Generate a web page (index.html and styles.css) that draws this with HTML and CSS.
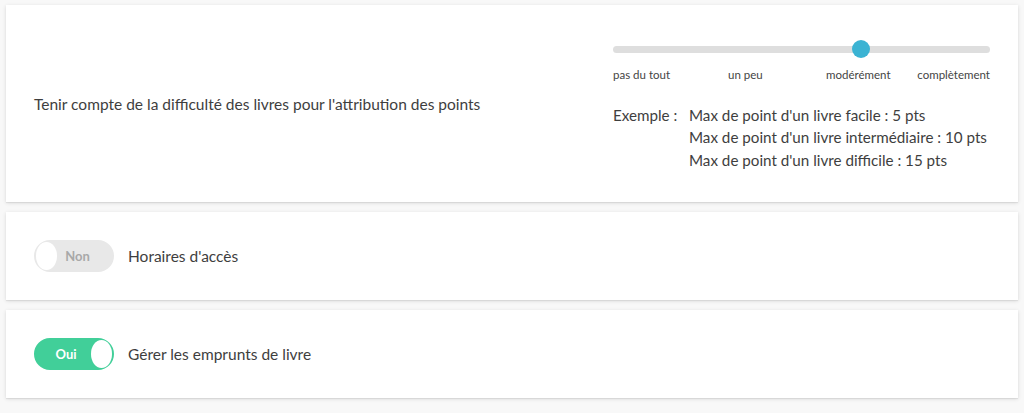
FILE: index.html
```html
<!DOCTYPE html>
<html lang="fr">
<head>
    <meta charset="UTF-8">
    <meta name="viewport" content="width=device-width, initial-scale=1.0">
    <title>Paramètres</title>
    <link rel="stylesheet" href="styles.css">
</head>
<body>
    <div class="card card-difficulty">
        <div class="setting-label">Tenir compte de la difficulté des livres pour l'attribution des points</div>
        <div class="difficulty">
            <div class="slider">
                <div class="slider-track"></div>
                <div class="slider-thumb" style="left: calc(9px + (100% - 18px) * 2 / 3);"></div>
            </div>
            <div class="slider-labels">
                <span>pas du tout</span>
                <span>un peu</span>
                <span>modérément</span>
                <span>complètement</span>
            </div>
            <div class="example">
                <span class="example-title">Exemple :</span>
                <div class="example-lines">
                    <div>Max de point d'un livre facile : 5 pts</div>
                    <div>Max de point d'un livre intermédiaire : 10 pts</div>
                    <div>Max de point d'un livre difficile : 15 pts</div>
                </div>
            </div>
        </div>
    </div>

    <div class="card card-toggle">
        <div class="toggle">
            <span class="toggle-knob"></span>
            <span class="toggle-text">Non</span>
        </div>
        <div class="setting-label">Horaires d'accès</div>
    </div>

    <div class="card card-toggle">
        <div class="toggle is-on">
            <span class="toggle-text">Oui</span>
            <span class="toggle-knob"></span>
        </div>
        <div class="setting-label">Gérer les emprunts de livre</div>
    </div>
</body>
</html>
```
FILE: styles.css
```css
body {
    font-family: Lato, "Open Sans", sans-serif;
    background-color: #f8f8f8;
    color: #3e3e3e;
    margin: 0;
    padding: 5px 6px;
}
.card {
    background-color: #fff;
    box-shadow: 0 1px 4px rgba(0, 0, 0, 0.12), 0 1px 1px rgba(0, 0, 0, 0.06);
    padding: 0 28px;
    margin-bottom: 10px;
    display: flex;
    align-items: center;
}
.card-difficulty {
    height: 197px;
    justify-content: space-between;
}
.card-toggle {
    height: 88px;
    gap: 14px;
}
.setting-label {
    font-size: 15.5px;
}
.difficulty {
    width: 377px;
    flex-shrink: 0;
    padding-top: 4px;
}
.slider {
    position: relative;
    height: 18px;
}
.slider-track {
    position: absolute;
    left: 0;
    right: 0;
    top: 6px;
    height: 7px;
    border-radius: 4px;
    background-color: #dedede;
}
.slider-thumb {
    position: absolute;
    top: 0;
    width: 18px;
    height: 18px;
    margin-left: -9px;
    border-radius: 50%;
    background-color: #3bb3d3;
}
.slider-labels {
    display: grid;
    grid-template-columns: 115px 98px 1fr auto;
    font-size: 11.5px;
    color: #444;
    margin-top: 10px;
}
.example {
    display: flex;
    margin-top: 23px;
    font-size: 15.2px;
    line-height: 22.5px;
    white-space: nowrap;
}
.example-title {
    width: 76px;
    flex-shrink: 0;
}
.toggle {
    width: 80px;
    height: 32px;
    box-sizing: border-box;
    border-radius: 16px;
    background-color: #e8e8e8;
    border: 2px solid #e8e8e8;
    display: flex;
    align-items: center;
}
.toggle-knob {
    width: 21px;
    height: 28px;
    border-radius: 50%;
    background-color: #fff;
    flex-shrink: 0;
}
.toggle-text {
    flex: 1;
    text-align: center;
    font-size: 13px;
    font-weight: bold;
    color: #a8a8a8;
    padding-right: 14px;
}
.toggle.is-on {
    background-color: #41cf99;
    border-color: #41cf99;
}
.toggle.is-on .toggle-text {
    color: #fff;
    padding-right: 0;
    padding-left: 5px;
}
```
